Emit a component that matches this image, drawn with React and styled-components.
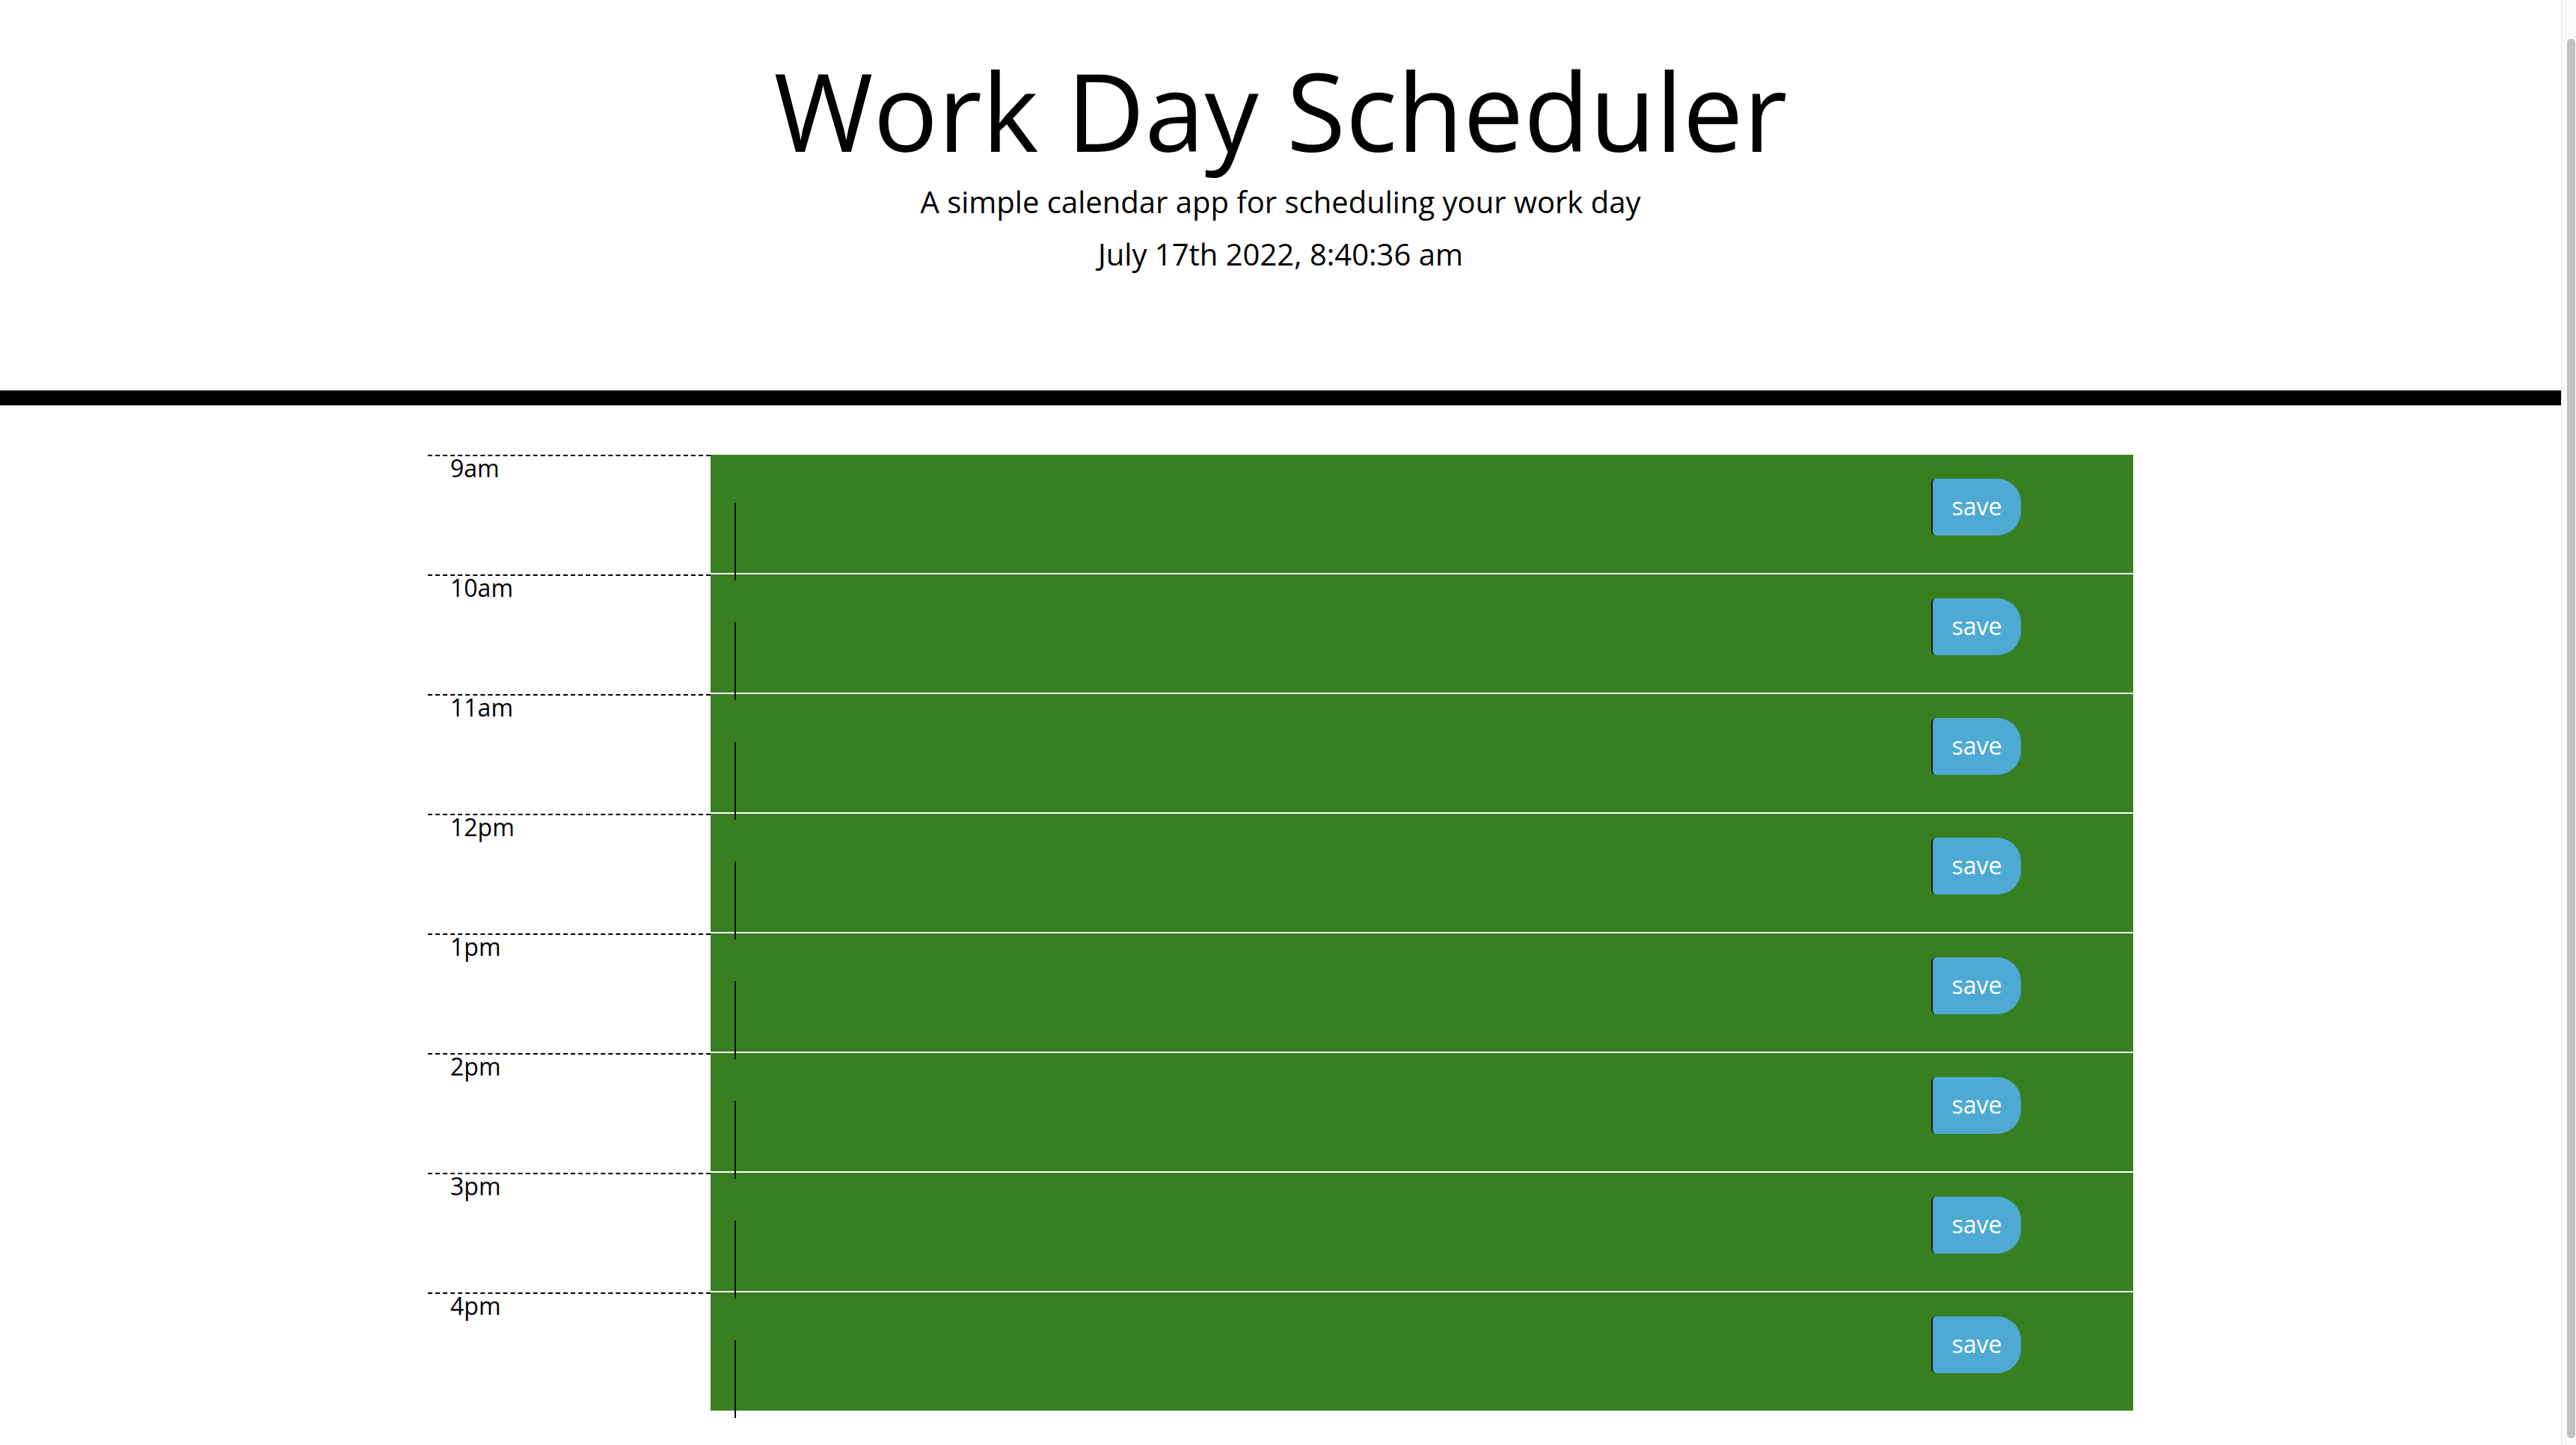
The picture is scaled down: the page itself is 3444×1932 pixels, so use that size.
import React from "react";
import styled, { createGlobalStyle } from "styled-components";

const GlobalStyle = createGlobalStyle`
  html {
    overflow: hidden;
  }
  body {
    margin: 0;
    background: #fff;
    color: #000;
    font-family: "Open Sans", "Liberation Sans", sans-serif;
  }
  * {
    box-sizing: border-box;
  }
`;

const Page = styled.div`
  margin-right: 20px;
  padding-bottom: 60px;
`;

const Header = styled.header`
  text-align: center;
  padding: 61px 0 152px;
  border-bottom: 20px solid #000;
`;

const Title = styled.h1`
  margin: 0 0 6px;
  font-size: 144px;
  font-weight: 400;
  line-height: 1.2;
`;

const Lead = styled.p`
  margin: 0 0 ${(p) => p.$gap || 0}px;
  font-size: 40px;
  line-height: 60px;
  font-weight: 400;
`;

const Container = styled.main`
  width: 2280px;
  margin: 66px auto 0;
`;

const Row = styled.div`
  display: flex;
  height: 160px;
`;

const Hour = styled.div`
  width: 378px;
  flex: none;
  border-top: 2px dashed #000;
  padding-left: 30px;
  font-size: 32px;
  line-height: 32px;
`;

const Block = styled.div`
  flex: 1;
  display: flex;
  align-items: flex-start;
  padding: 0 150px 0 32px;
  background: #387f22;
  border-bottom: 2px solid #fff;
`;

const Note = styled.textarea`
  flex: 1;
  height: 104px;
  margin-top: 64px;
  padding: 0;
  border: 0;
  border-left: 2px solid #000;
  background: transparent;
  resize: none;
  outline: none;
  position: relative;
  z-index: 1;
  font-family: inherit;
  font-size: 32px;
  color: #fff;
`;

const SaveBtn = styled.button`
  flex: none;
  width: 120px;
  height: 76px;
  margin-top: 32px;
  border: 0;
  border-left: 2px solid #1a1a1a;
  border-radius: 6px 32px 32px 6px;
  background: #4eaad3;
  color: #fff;
  font-family: inherit;
  font-size: 32px;
  line-height: 1;
  padding: 0 0 1px;
  cursor: pointer;
`;

const Scrollbar = styled.div`
  position: fixed;
  top: 0;
  right: 0;
  width: 20px;
  height: 100vh;
  background: #fafafa;
  border-left: 1px solid #e8e8e8;
`;

const Thumb = styled.div`
  position: absolute;
  top: 52px;
  bottom: 9px;
  left: 7px;
  width: 11px;
  border-radius: 6px;
  background: #c1c1c1;
`;

const hours = ["9am", "10am", "11am", "12pm", "1pm", "2pm", "3pm", "4pm"];

export default function App() {
  return (
    <>
      <GlobalStyle />
      <Page>
        <Header>
          <Title>Work Day Scheduler</Title>
          <Lead $gap={10}>A simple calendar app for scheduling your work day</Lead>
          <Lead>July 17th 2022, 8:40:36 am</Lead>
        </Header>
        <Container>
          {hours.map((h) => (
            <Row key={h}>
              <Hour>{h}</Hour>
              <Block>
                <Note />
                <SaveBtn>save</SaveBtn>
              </Block>
            </Row>
          ))}
        </Container>
      </Page>
      <Scrollbar>
        <Thumb />
      </Scrollbar>
    </>
  );
}
